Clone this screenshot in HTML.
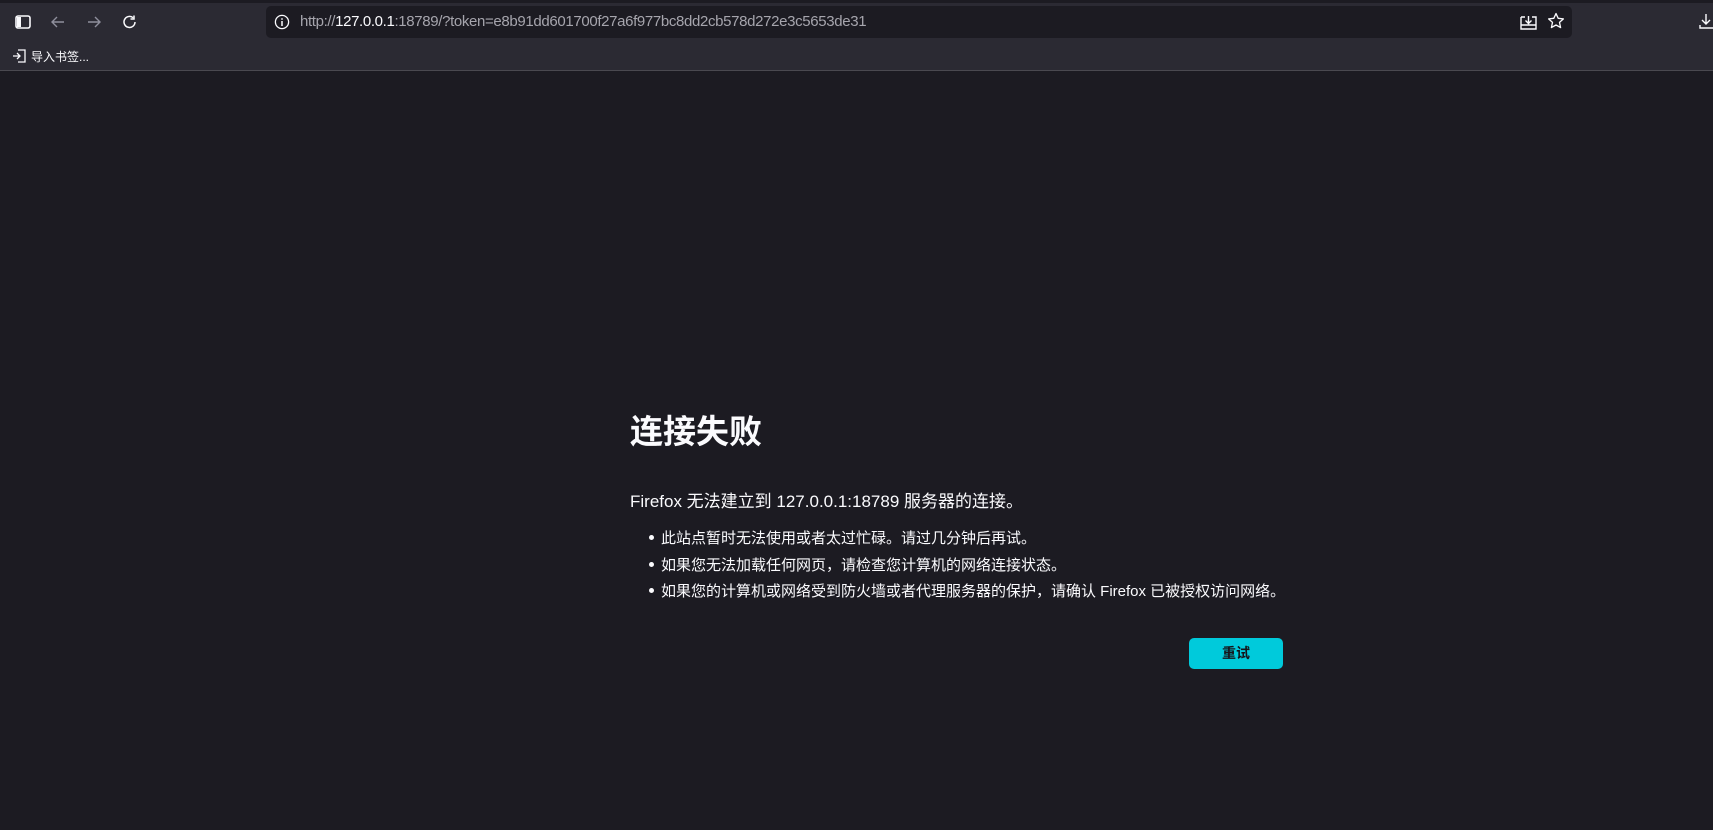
<!DOCTYPE html>
<html><head><meta charset="utf-8"><style>
*{margin:0;padding:0;box-sizing:border-box}
body{width:1713px;height:830px;background:#1c1b22;font-family:"Liberation Sans","Noto Sans CJK SC",sans-serif;color:#fbfbfe;position:relative;overflow:hidden}
.top{position:absolute;left:0;top:0;width:1713px;height:3px;background:#1c1b22}
.tb{position:absolute;left:0;top:3px;width:1713px;height:67px;background:#2b2a33}
.sep{position:absolute;left:0;top:70px;width:1713px;height:1px;background:#4a4950}
.url{position:absolute;left:266px;top:6px;width:1306px;height:32px;background:#1c1b22;border-radius:5px}
.urltxt{position:absolute;left:300px;top:13px;font-size:15px;letter-spacing:-0.35px;color:#a6a5ad;white-space:nowrap}
.urltxt b{font-weight:normal;color:#fbfbfe}
svg{position:absolute}
.bm{position:absolute;left:31px;top:48px;font-size:12px;color:#fbfbfe}
h1{position:absolute;left:630px;top:405px;font-size:33px;font-weight:bold;white-space:nowrap}
.p{position:absolute;left:630px;top:487px;font-size:17px;white-space:nowrap}
ul{position:absolute;left:661px;top:527px;font-size:15px;list-style:none;white-space:nowrap}
li{height:26.5px;position:relative}
li:before{content:"";position:absolute;left:-12px;top:8px;width:5px;height:5px;border-radius:50%;background:#fbfbfe}
.btn{position:absolute;left:1189px;top:638px;width:94px;height:31px;border-radius:5px;background:#00cadb;color:#15141a;font-size:14px;font-weight:bold;text-align:center;line-height:31px}
</style></head><body>
<div class="top"></div><div class="tb"></div><div class="sep"></div>
<svg style="left:15px;top:15px" width="16" height="14" viewBox="0 0 16 14"><rect x="1" y="1" width="14" height="12" rx="2" fill="none" stroke="#fbfbfe" stroke-width="1.6"/><rect x="2" y="2" width="4" height="10" fill="#fbfbfe"/></svg>
<svg style="left:50px;top:14px" width="16" height="16" viewBox="0 0 16 16"><path d="M14 8H2M7 3L2 8l5 5" fill="none" stroke="#8f8f9d" stroke-width="1.4"/></svg>
<svg style="left:86px;top:14px" width="16" height="16" viewBox="0 0 16 16"><path d="M2 8h12M9 3l5 5-5 5" fill="none" stroke="#8f8f9d" stroke-width="1.4"/></svg>
<svg style="left:122px;top:14px" width="16" height="16" viewBox="0 0 16 16"><path d="M13 8a5.5 5.5 0 1 1-2-4.3M12 1.5v3.5H8.5" fill="none" stroke="#fbfbfe" stroke-width="1.5"/></svg>
<div class="url"></div>
<svg style="left:274px;top:14px" width="16" height="16" viewBox="0 0 16 16"><circle cx="8" cy="8" r="6.6" fill="none" stroke="#fbfbfe" stroke-width="1.3"/><path d="M8 7v5M8 4.3v1.4" stroke="#fbfbfe" stroke-width="1.5"/></svg>
<div class="urltxt">http://<b>127.0.0.1</b>:18789/?token=e8b91dd601700f27a6f977bc8dd2cb578d272e3c5653de31</div>
<svg style="left:1520px;top:13px" width="17" height="17" viewBox="0 0 17 17"><path d="M1 4h4M12 4h4v12H1V4M1 12h15M8.5 3v7M5.5 7.5l3 3 3-3" fill="none" stroke="#fbfbfe" stroke-width="1.4"/></svg>
<svg style="left:1547px;top:12px" width="18" height="18" viewBox="0 0 18 18"><path d="M9 1.5l2.2 4.8 5.2.6-3.9 3.5 1.1 5.2L9 13l-4.6 2.6 1.1-5.2L1.6 6.9l5.2-.6z" fill="none" stroke="#fbfbfe" stroke-width="1.3" stroke-linejoin="round"/></svg>
<svg style="left:1699px;top:13px" width="14" height="16" viewBox="0 0 14 16"><path d="M7 1v10M3 7l4 4 4-4M1 12v3h13" fill="none" stroke="#fbfbfe" stroke-width="1.4"/></svg>
<svg style="left:12px;top:49px" width="14" height="14" viewBox="0 0 14 14"><path d="M6 1h7v12H6M1 7h7M5 4l3 3-3 3" fill="none" stroke="#fbfbfe" stroke-width="1.3"/></svg>
<div class="bm">导入书签...</div>
<h1>连接失败</h1>
<div class="p">Firefox 无法建立到 127.0.0.1:18789 服务器的连接。</div>
<ul>
<li>此站点暂时无法使用或者太过忙碌。请过几分钟后再试。</li>
<li>如果您无法加载任何网页，请检查您计算机的网络连接状态。</li>
<li>如果您的计算机或网络受到防火墙或者代理服务器的保护，请确认 Firefox 已被授权访问网络。</li>
</ul>
<div class="btn">重试</div>
</body></html>
